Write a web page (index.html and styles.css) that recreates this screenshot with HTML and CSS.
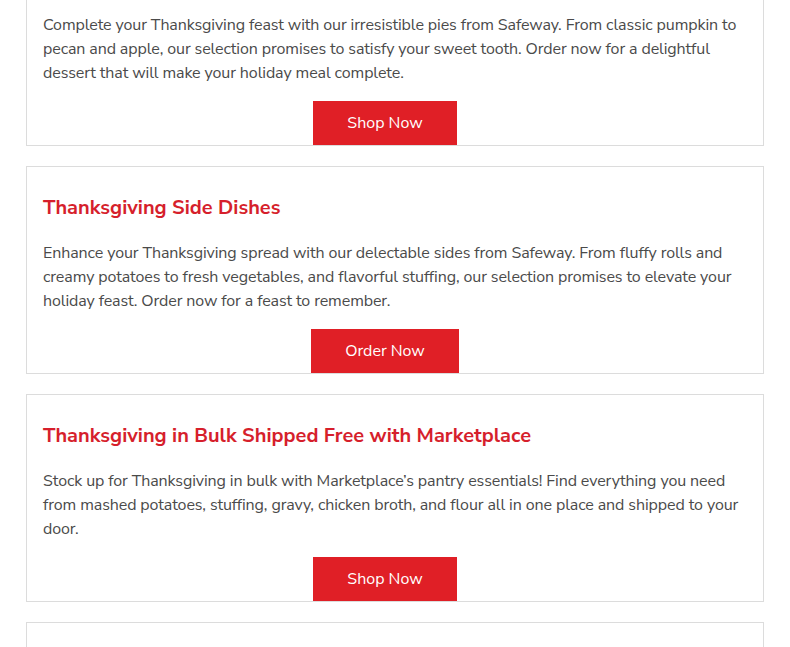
FILE: index.html
```html
<!DOCTYPE html>
<html lang="en">
<head>
<meta charset="utf-8">
<title>Thanksgiving</title>
<link rel="stylesheet" href="styles.css">
</head>
<body>
<main class="page">
  <section class="card">
    <h2 class="card-title">Thanksgiving Pies</h2>
    <p class="card-text">Complete your Thanksgiving feast with our irresistible pies from Safeway. From classic pumpkin to pecan and apple, our selection promises to satisfy your sweet tooth. Order now for a delightful dessert that will make your holiday meal complete.</p>
    <div class="card-action"><a class="btn" href="#">Shop Now</a></div>
  </section>
  <section class="card">
    <h2 class="card-title">Thanksgiving Side Dishes</h2>
    <p class="card-text">Enhance your Thanksgiving spread with our delectable sides from Safeway. From fluffy rolls and creamy potatoes to fresh vegetables, and flavorful stuffing, our selection promises to elevate your holiday feast. Order now for a feast to remember.</p>
    <div class="card-action"><a class="btn" href="#">Order Now</a></div>
  </section>
  <section class="card">
    <h2 class="card-title">Thanksgiving in Bulk Shipped Free with Marketplace</h2>
    <p class="card-text">Stock up for Thanksgiving in bulk with Marketplace’s pantry essentials! Find everything you need from mashed potatoes, stuffing, gravy, chicken broth, and flour all in one place and shipped to your door.</p>
    <div class="card-action"><a class="btn" href="#">Shop Now</a></div>
  </section>
  <section class="card">
    <h2 class="card-title">Thanksgiving Turkeys</h2>
    <p class="card-text">Find the perfect centerpiece for your holiday table.</p>
    <div class="card-action"><a class="btn" href="#">Shop Now</a></div>
  </section>
</main>
</body>
</html>
```
FILE: styles.css
```css
* { box-sizing: border-box; }
html, body { margin: 0; padding: 0; background: #fff; }
body {
  font-family: "Nunito Sans", Lato, "Open Sans", sans-serif;
  color: #4a4a4a;
  overflow: hidden;
}
.page {
  display: flex;
  flex-direction: column;
  gap: 20px;
  padding: 0 26px;
  margin-top: -62px;
}
.card {
  border: 1px solid #dcdcdc;
  padding: 29px 16px 0;
  display: flex;
  flex-direction: column;
}
.card-title {
  margin: 0;
  font-size: 20px;
  line-height: 24px;
  font-weight: 700;
  color: #d61f2c;
}
.card-text {
  margin: 21px 0 16px;
  font-size: 16px;
  line-height: 24px;
  letter-spacing: -0.1px;
}
.card-action {
  display: flex;
  justify-content: center;
  padding-right: 20px;
}
.btn {
  display: inline-flex;
  align-items: center;
  height: 44px;
  padding: 0 34px;
  background: #e01f26;
  color: #fff;
  font-size: 16px;
  text-decoration: none;
}
```
